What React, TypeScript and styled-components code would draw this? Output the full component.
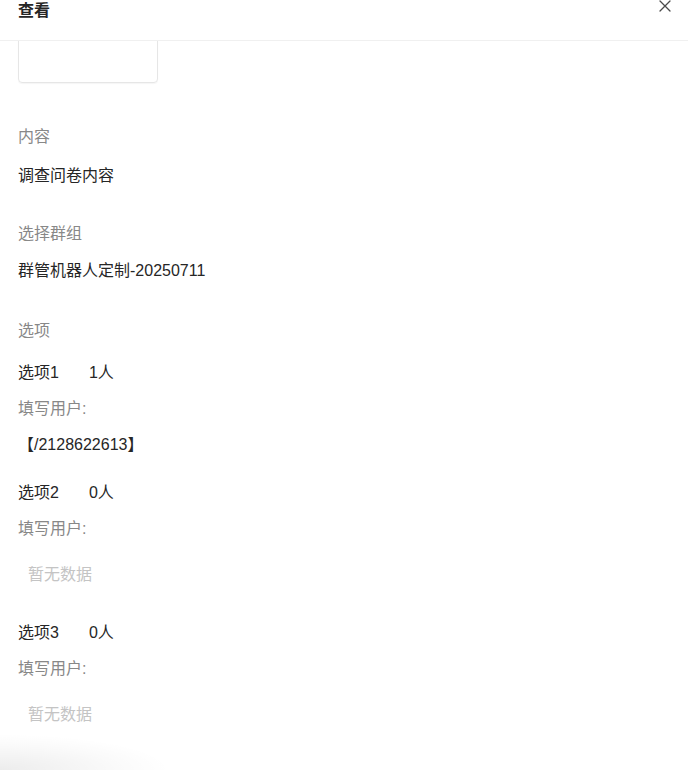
import React from "react";
import styled, { createGlobalStyle } from "styled-components";

const Global = createGlobalStyle`
  html, body { margin: 0; padding: 0; background: #fff; }
  body {
    font-family: "Liberation Sans", "Noto Sans CJK SC", sans-serif;
    font-size: 16px;
    color: #262626;
    width: 688px;
    height: 770px;
    overflow: hidden;
  }
`;

const Modal = styled.div`
  position: relative;
  width: 688px;
  height: 770px;
  background: #fff;
  display: flex;
  flex-direction: column;
  overflow: hidden;
`;

const Header = styled.div`
  position: relative;
  z-index: 2;
  height: 40px;
  flex: none;
  display: flex;
  justify-content: space-between;
  align-items: flex-start;
  padding: 0 18px;
  border-bottom: 1px solid #f0f0f0;
  background: #fff;
`;

const Title = styled.div`
  font-size: 16px;
  font-weight: 700;
  line-height: 21px;
  color: #262626;
`;

const Close = styled.button`
  border: none;
  background: transparent;
  padding: 0;
  margin: 0 -3px 0 0;
  width: 16px;
  height: 13px;
  display: flex;
  align-items: flex-start;
  justify-content: center;
  color: #4a4a4a;
  cursor: pointer;
`;

const Body = styled.div`
  flex: 1;
  overflow: hidden;
  padding: 0 18px;
  display: flex;
  flex-direction: column;
`;

const UploadBox = styled.div`
  width: 140px;
  height: 100px;
  margin-top: -58px;
  box-sizing: border-box;
  border: 1px solid #e6e6e6;
  border-radius: 4px;
  box-shadow: 0 1px 1px rgba(0, 0, 0, 0.04);
  flex: none;
`;

const Label = styled.div<{ $top: number }>`
  margin-top: ${(p) => p.$top}px;
  line-height: 22px;
  color: #888;
`;

const Value = styled.div<{ $top: number; $muted?: boolean; $indent?: number }>`
  margin-top: ${(p) => p.$top}px;
  padding-left: ${(p) => p.$indent ?? 0}px;
  line-height: 22px;
  color: ${(p) => (p.$muted ? "#c4c4c4" : "#262626")};
`;

const OptionRow = styled.div<{ $top: number }>`
  margin-top: ${(p) => p.$top}px;
  line-height: 22px;
  color: #262626;
  display: flex;
  gap: 30px;
`;

const BottomShade = styled.div`
  position: absolute;
  left: 0;
  bottom: 0;
  width: 260px;
  height: 36px;
  pointer-events: none;
  background: radial-gradient(ellipse 170px 36px at 0% 100%, rgba(0, 0, 0, 0.075), rgba(0, 0, 0, 0.02) 70%, rgba(0, 0, 0, 0) 100%);
`;

type Opt = { name: string; count: number; users: string[]; gapTop: number };

const options: Opt[] = [
  { name: "选项1", count: 1, users: ["【/2128622613】"], gapTop: 20 },
  { name: "选项2", count: 0, users: [], gapTop: 26 },
  { name: "选项3", count: 0, users: [], gapTop: 36 },
];

export default function App() {
  return (
    <>
      <Global />
      <Modal>
        <Header>
          <Title>查看</Title>
          <Close aria-label="close">
            <svg width="12" height="12" viewBox="0 0 12 12" fill="none">
              <path d="M1 1 L11 11 M11 1 L1 11" stroke="currentColor" strokeWidth="1.3" strokeLinecap="round" />
            </svg>
          </Close>
        </Header>
        <Body>
          <UploadBox />
          <Label $top={43}>内容</Label>
          <Value $top={17}>调查问卷内容</Value>
          <Label $top={36}>选择群组</Label>
          <Value $top={15}>群管机器人定制-20250711</Value>
          <Label $top={38}>选项</Label>
          {options.map((o) => (
            <React.Fragment key={o.name}>
              <OptionRow $top={o.gapTop}>
                <span>{o.name}</span>
                <span>{o.count}人</span>
              </OptionRow>
              <Label $top={14}>填写用户:</Label>
              {o.users.length > 0 ? (
                o.users.map((u) => (
                  <Value key={u} $top={14}>
                    {u}
                  </Value>
                ))
              ) : (
                <Value $top={24} $muted $indent={10}>
                  暂无数据
                </Value>
              )}
            </React.Fragment>
          ))}
        </Body>
        <BottomShade />
      </Modal>
    </>
  );
}
